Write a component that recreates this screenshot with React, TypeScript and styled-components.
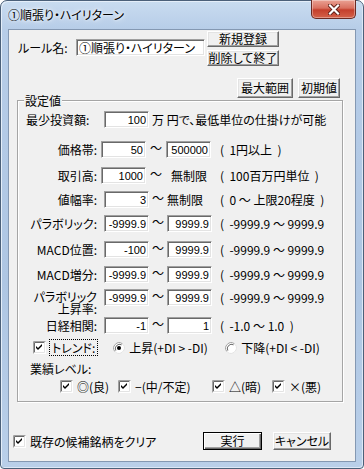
import styled, { createGlobalStyle } from "styled-components";

const GlobalStyle = createGlobalStyle`
  html, body {
    margin: 0;
    padding: 0;
    background: #ffffff;
  }
  body {
    font-family: "Noto Sans CJK JP", "Noto Sans", sans-serif;
    font-size: 12px;
    font-feature-settings: "palt";
    color: #000;
  }
`;

const Window = styled.div`
  box-sizing: border-box;
  width: 364px;
  height: 469px;
  display: flex;
  flex-direction: column;
  padding-bottom: 6px;
  border: 1px solid #4b6079;
  border-radius: 7px 7px 4px 4px;
  background: linear-gradient(
    to bottom,
    #c9dcf0 0px,
    #b7cde8 28px,
    #aec6e3 60%,
    #b9cfe9 100%
  );
  box-shadow: inset 1px 1px 0 #e4eef9, inset -1px -1px 0 #dce8f6;
`;

const TitleBar = styled.div`
  height: 28px;
  flex: none;
  display: flex;
  align-items: flex-start;
  justify-content: space-between;
  padding-left: 7px;
`;

const Title = styled.span`
  line-height: 28px;
  font-size: 12px;
  text-shadow: 0 0 6px #ffffff, 0 0 3px #ffffff;
`;

const CloseButton = styled.div`
  box-sizing: border-box;
  width: 45px;
  height: 19px;
  margin-top: -1px;
  margin-right: 7px;
  display: flex;
  align-items: center;
  justify-content: center;
  border: 1px solid #6b2a22;
  border-top: none;
  border-radius: 0 0 5px 5px;
  background: linear-gradient(to bottom, #eaa294 0%, #d9705f 45%, #c43f2c 55%, #d4624a 100%);
  box-shadow: inset 0 0 0 1px rgba(255, 255, 255, 0.35);
`;

const Client = styled.div`
  flex: 1;
  margin: 0 7px;
  border: 1px solid #8498b2;
  background: #f0f0f0;
  display: flex;
  flex-direction: column;
`;

const RuleRow = styled.div`
  display: flex;
  align-items: flex-start;
  margin-top: 1px;
  padding-left: 9px;
`;

const RuleLabel = styled.span`
  width: 58px;
  margin-top: 8px;
  line-height: 17px;
  white-space: nowrap;
`;

const NameInput = styled.input`
  box-sizing: border-box;
  width: 129px;
  height: 17px;
  margin-top: 8px;
  padding: 0 2px;
  font: inherit;
  font-size: 12px;
  line-height: 15px;
  background: #fff;
  border: 1px solid;
  border-color: #a0a0a0 #ffffff #ffffff #a0a0a0;
  box-shadow: inset 1px 1px 0 #696969, inset -1px -1px 0 #e3e3e3;
  outline: none;
`;

const ButtonStack = styled.div`
  display: flex;
  flex-direction: column;
  gap: 3px;
  margin-left: 2px;
`;

const Button = styled.button<{ $w: number; $h: number; $default?: boolean }>`
  box-sizing: border-box;
  width: ${(p) => p.$w}px;
  height: ${(p) => p.$h}px;
  padding: 0;
  font: inherit;
  font-size: 12px;
  line-height: 1;
  color: #000;
  background: #f0f0f0;
  border: 1px solid;
  border-color: ${(p) =>
    p.$default ? "#000 #000 #000 #000" : "#ffffff #696969 #696969 #ffffff"};
  box-shadow: ${(p) =>
    p.$default
      ? "inset 1px 1px 0 #ffffff, inset -1px -1px 0 #696969, inset -2px -2px 0 #a0a0a0"
      : "inset -1px -1px 0 #a0a0a0, inset 1px 1px 0 #e3e3e3"};
  display: flex;
  align-items: center;
  justify-content: center;
  white-space: nowrap;
`;

const TopButtons = styled.div`
  display: flex;
  justify-content: flex-end;
  gap: 5px;
  margin-top: 12px;
  padding-right: 15px;
`;

const GroupBox = styled.div`
  position: relative;
  box-sizing: border-box;
  width: 326px;
  height: 302px;
  margin-top: 2px;
  margin-left: 8px;
  border: 1px solid #a5a5a5;
  box-shadow: inset 1px 1px 0 #ffffff, 1px 1px 0 #ffffff;
`;

const Legend = styled.span`
  position: absolute;
  left: 6px;
  top: -9px;
  padding: 0 1px;
  line-height: 17px;
  background: #f0f0f0;
`;

const Row = styled.div<{ $top: number; $h?: number; $pl?: number }>`
  display: flex;
  align-items: flex-start;
  margin-top: ${(p) => p.$top}px;
  height: ${(p) => p.$h ?? 17}px;
  padding-left: ${(p) => p.$pl ?? 0}px;
`;

const FieldLabel = styled.span<{ $left?: boolean; $twoLines?: boolean }>`
  box-sizing: border-box;
  width: 79px;
  flex: none;
  text-align: ${(p) => (p.$left ? "left" : "right")};
  padding-left: ${(p) => (p.$left ? 8 : 0)}px;
  padding-top: ${(p) => (p.$twoLines ? 2 : 0)}px;
  line-height: ${(p) => (p.$twoLines ? 12 : 17)}px;
  white-space: pre-line;
`;

const Range = styled.div`
  width: 123px;
  flex: none;
  display: flex;
  align-items: flex-start;
`;

const NumBox = styled.input<{ $ml?: number }>`
  box-sizing: border-box;
  width: 45px;
  height: 17px;
  flex: none;
  margin-left: ${(p) => p.$ml ?? 0}px;
  padding: 0 2px 0 1px;
  font-family: "Liberation Sans", Arial, sans-serif;
  font-size: 11px;
  line-height: 15px;
  text-align: right;
  background: #fff;
  border: 1px solid;
  border-color: #a0a0a0 #ffffff #ffffff #a0a0a0;
  box-shadow: inset 1px 1px 0 #696969, inset -1px -1px 0 #e3e3e3;
  outline: none;
`;

const Tilde = styled.span<{ $w: number }>`
  width: ${(p) => p.$w}px;
  flex: none;
  text-align: center;
  line-height: 13px;
`;

const Text = styled.span<{ $ml?: number }>`
  margin-left: ${(p) => p.$ml ?? 0}px;
  line-height: 17px;
  white-space: pre;
`;

const FocusText = styled.span`
  margin-left: 3px;
  padding: 0 2px;
  line-height: 15px;
  border: 1px dotted #000;
  white-space: pre;
`;

const Option = styled.label<{ $w?: number; $ml?: number }>`
  display: flex;
  align-items: center;
  height: 17px;
  flex: none;
  width: ${(p) => (p.$w ? `${p.$w}px` : "auto")};
  margin-left: ${(p) => p.$ml ?? 0}px;
`;

const BottomRow = styled.div`
  display: flex;
  align-items: center;
  height: 18px;
  margin-top: 30px;
  padding-left: 4px;
  padding-right: 24px;
`;

const BottomButtons = styled.div`
  margin-left: auto;
  display: flex;
  gap: 11px;
`;

const Check = () => (
  <svg width="13" height="13" viewBox="0 0 13 13" style={{ flex: "none" }}>
    <rect x="0" y="0" width="13" height="13" fill="#ffffff" />
    <path d="M0.5 12.5 V0.5 H12.5" stroke="#a0a0a0" fill="none" />
    <path d="M1.5 11.5 V1.5 H11.5" stroke="#696969" fill="none" />
    <path d="M1.5 11.5 H11.5 V1.5" stroke="#e3e3e3" fill="none" />
    <path d="M3 5 L5 7 L9 3 V5 L5 9 L3 7 Z" fill="#000" />
  </svg>
);

const Radio = ({ on }: { on?: boolean }) => (
  <svg width="12" height="12" viewBox="0 0 12 12" style={{ flex: "none" }}>
    <circle cx="6" cy="6" r="5.5" fill="#ffffff" />
    <path d="M1.8 9.5 A5.5 5.5 0 0 1 9.5 1.8" stroke="#a0a0a0" fill="none" />
    <path d="M2.8 8.6 A4.3 4.3 0 0 1 8.6 2.8" stroke="#696969" fill="none" />
    <path d="M10.2 2.5 A5.5 5.5 0 0 1 2.5 10.2" stroke="#e3e3e3" fill="none" />
    {on && <circle cx="6" cy="6" r="2" fill="#000" />}
  </svg>
);

type RangeRow = {
  label: string;
  top: number;
  ml: number;
  from: string;
  to?: string;
  freeMl?: number;
  note: string;
  twoLines?: boolean;
};

const rangeRows: RangeRow[] = [
  { label: "価格帯:", top: 13, ml: 4, from: "50", to: "500000", note: "(  1円以上  )" },
  { label: "取引高:", top: 9, ml: 4, from: "1000", freeMl: 5, note: "(  100百万円単位  )" },
  { label: "値幅率:", top: 7, ml: 7, from: "3", freeMl: 0, note: "(  0 ～ 上限20程度  )" },
  { label: "パラボリック:", top: 7, ml: 7, from: "-9999.9", to: "9999.9", note: "(  -9999.9 ～ 9999.9" },
  { label: "MACD位置:", top: 9, ml: 7, from: "-100", to: "9999.9", note: "(  -9999.9 ～ 9999.9" },
  { label: "MACD増分:", top: 8, ml: 7, from: "-9999.9", to: "9999.9", note: "(  -9999.9 ～ 9999.9" },
  {
    label: "パラボリック\n上昇率:",
    top: 6,
    ml: 7,
    from: "-9999.9",
    to: "9999.9",
    note: "(  -9999.9 ～ 9999.9",
    twoLines: true,
  },
  { label: "日経相関:", top: 0, ml: 7, from: "-1", to: "1", note: "(  -1.0 ～ 1.0  )" },
];

const levels = [
  { text: "◎(良)", w: 58 },
  { text: "−(中/不定)", w: 94 },
  { text: "△(暗)", w: 60 },
  { text: "×(悪)", w: 0 },
];

const App = () => {
  return (
    <>
      <GlobalStyle />
      <Window>
        <TitleBar>
          <Title>①順張り・ハイリターン</Title>
          <CloseButton>
            <svg width="12" height="11" viewBox="0 0 12 11">
              <path d="M2 1.5 L10 9.5 M10 1.5 L2 9.5" stroke="#5a1c14" strokeWidth="4" strokeLinecap="square" />
              <path d="M2 1.5 L10 9.5 M10 1.5 L2 9.5" stroke="#ffffff" strokeWidth="2.2" strokeLinecap="square" />
            </svg>
          </CloseButton>
        </TitleBar>

        <Client>
          <RuleRow>
            <RuleLabel>ルール名:</RuleLabel>
            <NameInput readOnly defaultValue="①順張り・ハイリターン" />
            <ButtonStack>
              <Button $w={72} $h={16}>新規登録</Button>
              <Button $w={72} $h={16}>削除して終了</Button>
            </ButtonStack>
          </RuleRow>

          <TopButtons>
            <Button $w={56} $h={20}>最大範囲</Button>
            <Button $w={42} $h={20}>初期値</Button>
          </TopButtons>

          <GroupBox>
            <Legend>設定値</Legend>

            <Row $top={10}>
              <FieldLabel $left>最少投資額:</FieldLabel>
              <NumBox $ml={7} readOnly defaultValue="100" />
              <Text $ml={3}>万 円で、最低単位の仕掛けが可能</Text>
            </Row>

            {rangeRows.map((r) => (
              <Row key={r.label} $top={r.top} $h={r.twoLines ? 28 : 17}>
                <FieldLabel $twoLines={r.twoLines}>{r.label}</FieldLabel>
                <Range>
                  <NumBox $ml={r.ml} readOnly defaultValue={r.from} />
                  <Tilde $w={r.ml === 4 ? 20 : 18}>～</Tilde>
                  {r.to !== undefined ? (
                    <NumBox readOnly defaultValue={r.to} />
                  ) : (
                    <Text $ml={r.freeMl}>無制限</Text>
                  )}
                </Range>
                <Text>{r.note}</Text>
              </Row>
            ))}

            <Row $top={5} $pl={15}>
              <Option>
                <Check />
                <FocusText>トレンド:</FocusText>
              </Option>
              <Option $w={112} $ml={15}>
                <Radio on />
                <Text $ml={4}>上昇(+DI &gt; -DI)</Text>
              </Option>
              <Option>
                <Radio />
                <Text $ml={4}>下降(+DI &lt; -DI)</Text>
              </Option>
            </Row>

            <Row $top={4} $pl={12}>
              <Text>業績レベル:</Text>
            </Row>

            <Row $top={1} $pl={42}>
              {levels.map((l) => (
                <Option key={l.text} $w={l.w || undefined}>
                  <Check />
                  <Text $ml={4}>{l.text}</Text>
                </Option>
              ))}
            </Row>
          </GroupBox>

          <BottomRow>
            <Option>
              <Check />
              <Text $ml={4}>既存の候補銘柄をクリア</Text>
            </Option>
            <BottomButtons>
              <Button $w={59} $h={18} $default>実行</Button>
              <Button $w={58} $h={18}>キャンセル</Button>
            </BottomButtons>
          </BottomRow>
        </Client>
      </Window>
    </>
  );
};

export default App;
